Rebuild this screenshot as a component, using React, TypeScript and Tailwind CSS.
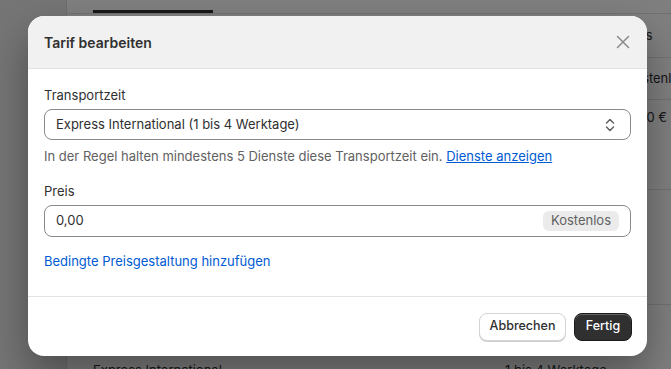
export default function App() {
  return (
    <div
      className="relative w-[671px] h-[369px] overflow-hidden flex bg-white"
      style={{ fontFamily: "Inter, 'Noto Sans', sans-serif" }}
    >
      {/* page behind the dialog */}
      <div className="w-[67px] shrink-0 bg-[#ebebeb] border-r border-[#dcdcdc]" />
      <div className="flex-1 min-w-0 flex flex-col text-[13px] text-[#303030] whitespace-nowrap">
        <div className="h-[14px] shrink-0 border-b border-[#e3e3e3] pl-[26px] flex items-end">
          <div className="w-[120px] h-[3px] bg-[#303030]" />
        </div>
        <div className="h-[44px] shrink-0 border-b border-[#e3e3e3] flex items-center pl-[555px]">
          <span>Preis</span>
        </div>
        <div className="h-[42px] shrink-0 border-b border-[#e3e3e3] flex items-center pl-[559px]">
          <span>Kostenlos</span>
        </div>
        <div className="h-[90px] shrink-0 border-b border-[#e3e3e3] flex items-start pt-[8px] pl-[560px]">
          <span>0,00 € EUR</span>
        </div>
        <div className="h-[115px] shrink-0 border-b border-[#e3e3e3]" />
        <div className="shrink-0 flex justify-between pl-[26px] pt-[56px]">
          <span>Express International</span>
          <span className="w-[166px]">1 bis 4 Werktage</span>
        </div>
      </div>

      {/* overlay */}
      <div className="absolute inset-0 bg-black/50">
        <div className="absolute left-[28px] top-[16px] w-[619px] h-[340px] bg-white rounded-[16px] shadow-[0_20px_40px_rgba(0,0,0,0.35)] overflow-hidden flex flex-col">
          <div className="h-[53px] bg-[#f1f1f1] border-b border-[#e3e3e3] flex items-center justify-between pl-4 pr-[14px] shrink-0">
            <h2 className="text-[14px] font-semibold text-[#303030]">Tarif bearbeiten</h2>
            <svg width="20" height="20" viewBox="0 0 20 20" fill="none">
              <path d="M4.5 4.5l11 11M15.5 4.5l-11 11" stroke="#8a8a8a" strokeWidth="1.5" strokeLinecap="round" />
            </svg>
          </div>

          <div className="px-4 pt-4 flex-1 border-b border-[#e3e3e3] text-[13px] text-[#303030]">
            <div className="leading-[20px]">Transportzeit</div>
            <div className="mt-[4px] h-[31px] border border-[#8a8a8a] rounded-[8px] flex items-center justify-between pl-[11px] pr-[10px]">
              <span>Express International (1 bis 4 Werktage)</span>
              <svg width="20" height="20" viewBox="0 0 20 20" fill="none">
                <path d="M6.5 8l3.5-3.5 3.5 3.5M6.5 12l3.5 3.5 3.5-3.5" stroke="#616161" strokeWidth="1.5" strokeLinecap="round" strokeLinejoin="round" />
              </svg>
            </div>
            <div className="mt-[6px] leading-[20px] text-[#616161]">
              In der Regel halten mindestens 5 Dienste diese Transportzeit ein.{" "}
              <span className="text-[#005bd3] underline">Dienste anzeigen</span>
            </div>
            <div className="mt-[15px] leading-[20px]">Preis</div>
            <div className="mt-[4px] h-[32px] border border-[#8a8a8a] rounded-[8px] flex items-center justify-between pl-[11px] pr-[11px]">
              <span>0,00</span>
              <span className="h-[20px] px-[8px] rounded-[6px] bg-[#ebebeb] text-[#616161] flex items-center">Kostenlos</span>
            </div>
            <div className="mt-[14px] leading-[20px] text-[#005bd3]">Bedingte Preisgestaltung hinzufügen</div>
          </div>

          <div className="h-[59px] shrink-0 flex items-center justify-end gap-2 px-[15px] text-[12.5px]">
            <button className="h-[28px] w-[87px] rounded-[8px] bg-white border border-[#d4d4d4] text-[#303030] shadow-[0_1px_0_#d0d0d0] font-medium">
              Abbrechen
            </button>
            <button className="h-[28px] w-[58px] rounded-[8px] bg-[#303030] border border-[#1a1a1a] text-white shadow-[inset_0_1px_0_rgba(255,255,255,0.25)] font-medium">
              Fertig
            </button>
          </div>
        </div>
      </div>
    </div>
  );
}
